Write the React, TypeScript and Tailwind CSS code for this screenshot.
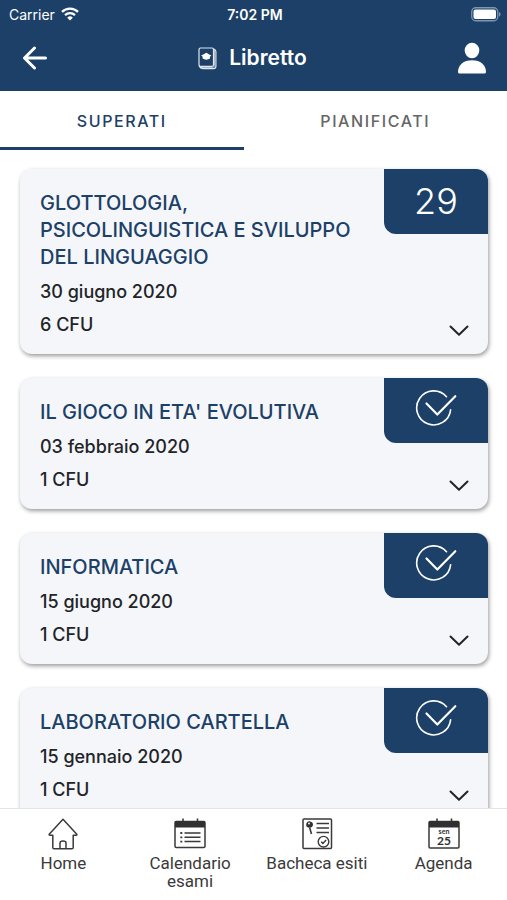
import React, { useState } from "react";

interface Exam {
  id: string;
  title: string;
  date: string;
  cfu: number;
  grade?: number;
}

const exams: Exam[] = [
  { id: "e1", title: "GLOTTOLOGIA, PSICOLINGUISTICA E SVILUPPO DEL LINGUAGGIO", date: "30 giugno 2020", cfu: 6, grade: 29 },
  { id: "e2", title: "IL GIOCO IN ETA' EVOLUTIVA", date: "03 febbraio 2020", cfu: 1 },
  { id: "e3", title: "INFORMATICA", date: "15 giugno 2020", cfu: 1 },
  { id: "e4", title: "LABORATORIO CARTELLA", date: "15 gennaio 2020", cfu: 1 },
];

const WifiIcon = () => (
  <svg width="18" height="14" viewBox="0 0 18 14" fill="none" stroke="white" strokeWidth="2.3">
    <path d="M1 4.9a11.6 11.6 0 0 1 16 0" />
    <path d="M4 8.1a7.2 7.2 0 0 1 10 0" />
    <path d="M9 13.6 6.2 10.7a4 4 0 0 1 5.6 0z" fill="white" stroke="none" />
  </svg>
);

const BatteryIcon = () => (
  <svg width="31" height="15" viewBox="0 0 31 15">
    <rect x="1.75" y="0.75" width="26" height="13" rx="4" fill="none" stroke="#8096ae" strokeWidth="1.3" />
    <rect x="3.5" y="2.5" width="22.5" height="9.5" rx="2" fill="white" />
    <path d="M29 5v4.600c1-.4 1.500-1.300 1.500-2.300S30 5.400 29 5z" fill="#8096ae" />
  </svg>
);

const BackIcon = () => (
  <svg width="26" height="24" viewBox="0 0 26 24" fill="none" stroke="white" strokeWidth="3" strokeLinecap="round" strokeLinejoin="round">
    <path d="M12.500 2 2.500 12l10 10M3 12h20.500" />
  </svg>
);

const BookletIcon = () => (
  <svg width="19" height="23" viewBox="0 0 19 23" fill="none" stroke="#dfe6ee" strokeWidth="1.200" strokeLinejoin="round">
    <rect x="1" y="1" width="14.500" height="18.300" rx="1.500" />
    <path d="M15.500 1.800c1.600.8 2.400 1.300 2.400 2.700v14.800c0 1.500-.8 2.400-2.300 2.400H5.200c-2.200 0-3.200-.7-4.200-3.200" />
    <path d="M16.300 3v15.500c0 1.200-.6 1.800-1.800 1.800H3" strokeWidth="0.900" />
    <path d="m8.300 5.800 5.200 2.900-1.500.9v1.900c-2 1.500-5.400 1.500-7.400 0V9.600L3 8.700z" fill="white" stroke="none" />
  </svg>
);

const UserIcon = () => (
  <svg width="30" height="32" viewBox="0 0 30 32" fill="white">
    <ellipse cx="15" cy="8.500" rx="7.300" ry="7.800" />
    <path d="M1 30C1 23 6.500 18.300 15 18.300S29 23 29 30c0 .9-.7 1.500-1.600 1.500H2.600C1.700 31.500 1 30.900 1 30z" />
  </svg>
);

const CheckIcon = () => (
  <svg width="42" height="38" viewBox="0 0 42 38" fill="none" stroke="white" strokeLinecap="round" strokeLinejoin="round">
    <path d="M31.500 7.700A17 17 0 1 0 35.600 20.800" strokeWidth="1.600" />
    <path d="M11.500 14.500 22.300 25.500 40.300 7.200" strokeWidth="2.200" />
  </svg>
);

const ChevronIcon = () => (
  <svg width="20" height="12" viewBox="0 0 20 12" fill="none" stroke="#222428" strokeWidth="2" strokeLinecap="round" strokeLinejoin="round">
    <path d="m1.500 1.500 8.500 8.300 8.500-8.300" />
  </svg>
);

const HomeIcon = () => (
  <svg width="32" height="32" viewBox="0 0 32 32" fill="none" stroke="#3a3a3a" strokeWidth="1.500" strokeLinejoin="round">
    <path d="M16 1.200 2.200 16.300c-.3.500 0 .9.600.9h3v12.300c0 .8.400 1.300 1.300 1.300h17.800c.9 0 1.300-.5 1.300-1.300V17.200h3c.6 0 .9-.4.600-.9z" />
    <path d="M13 30.500v-5.700c0-1.300.9-1.900 3-1.900s3 .6 3 1.900v5.700" />
  </svg>
);

const CalendarIcon = () => (
  <svg width="32" height="32" viewBox="0 0 32 32" fill="none" stroke="#3a3a3a" strokeWidth="1.500">
    <rect x="1" y="3.500" width="30" height="26" rx="1.200" />
    <path d="M1 3h30v6.500H1z" fill="#303030" stroke="none" />
    <path d="M9 0.500v3M23.500 0.500v3" strokeWidth="1.600" />
    <path d="M10.500 15h16M10.500 19.300h16M10.500 23.600h16" />
    <path d="M6.300 15h2M6.300 19.300h2M6.300 23.600h2" strokeWidth="1.800" />
  </svg>
);

const BoardIcon = () => (
  <svg width="32" height="32" viewBox="0 0 32 32" fill="none" stroke="#3a3a3a" strokeWidth="1.500">
    <rect x="2" y="1" width="28.500" height="29.500" rx="1" />
    <path d="M15.500 5.500H28M15.500 10H28M15.500 14.500H28" strokeWidth="1.600" />
    <path d="M5.200 7.500C4.800 4.800 6.800 3 9 3.400c2.200.3 3.400 2 2.900 3.800-.4 1.500-1.400 2.300-2.900 2.400-2 .2-3.500-.5-3.800-2.100z" fill="#303030" stroke="none" />
    <path d="M8.600 9.500 10.500 16" strokeWidth="1.600" />
    <circle cx="8" cy="5.500" r="0.900" fill="white" stroke="none" />
    <circle cx="22.500" cy="23.700" r="5.300" strokeWidth="1.400" />
    <path d="m20.200 23.700 1.700 1.700 3.200-3.300" />
  </svg>
);

const AgendaIcon = () => (
  <svg width="32" height="32" viewBox="0 0 32 32" fill="none" stroke="#3a3a3a" strokeWidth="1.500">
    <rect x="1" y="3.500" width="30" height="26.500" rx="1.200" />
    <path d="M1 3h30v6.500H1z" fill="#303030" stroke="none" />
    <path d="M9 0.500v3M23.500 0.500v3" strokeWidth="1.600" />
    <g fill="#303030" stroke="none" fontFamily="Lato, sans-serif" fontWeight="700" textAnchor="middle">
      <text x="16" y="15.500" fontSize="7">sen</text>
      <text x="16" y="27" fontSize="12">25</text>
    </g>
  </svg>
);

const navItems = [
  { label: "Home", icon: <HomeIcon /> },
  { label: "Calendario esami", icon: <CalendarIcon /> },
  { label: "Bacheca esiti", icon: <BoardIcon /> },
  { label: "Agenda", icon: <AgendaIcon /> },
];

const ExamCard: React.FC<{ exam: Exam }> = ({ exam }) => (
  <article className="relative flex flex-col gap-[9px] pt-[21px] pb-[17px] pl-5 rounded-xl bg-[#f4f6fa] overflow-hidden shadow-[1px_2px_4px_rgba(0,0,0,0.4)]">
    <h2 className="pr-[130px] text-[20px] leading-[27px] font-[450] text-[#1c4067]">{exam.title}</h2>
    <p className="text-[18px] leading-6 font-[450] text-[#222428]">{exam.date}</p>
    <p className="text-[18px] leading-6 font-[450] text-[#222428]">{exam.cfu} CFU</p>

    {/* Grade, or a tick for a pass without grade */}
    <div className="absolute top-0 right-0 w-[104px] h-[65px] flex justify-center rounded-bl-xl bg-[#1c4067] text-white">
      {exam.grade ? (
        <span className="text-[36px] leading-[65px] font-[350]">{exam.grade}</span>
      ) : (
        <span className="pt-[11px]"><CheckIcon /></span>
      )}
    </div>

    <button type="button" aria-label="Mostra dettagli" className="absolute bottom-0 right-0 pr-[19px] pb-[17px]">
      <ChevronIcon />
    </button>
  </article>
);

export default function App() {
  const [tab, setTab] = useState("superati");

  return (
    <div className="h-screen flex flex-col bg-white font-['Inter',sans-serif]">
      {/* Status bar and title */}
      <header className="bg-[#1c4067] text-white">
        <div className="grid grid-cols-3 items-center h-7 pl-[9px] pr-[6px] text-[14px]">
          <div className="flex items-center gap-[6px]">
            <span>Carrier</span>
            <WifiIcon />
          </div>
          <span className="text-center font-semibold">7:02 PM</span>
          <div className="flex justify-end"><BatteryIcon /></div>
        </div>
        <div className="flex items-center justify-between h-[63px] pl-[22px] pr-5 pb-[3px]">
          <button type="button" aria-label="Indietro"><BackIcon /></button>
          <h1 className="flex items-center gap-3 text-[21px] font-semibold">
            <BookletIcon />
            Libretto
          </h1>
          <button type="button" aria-label="Profilo"><UserIcon /></button>
        </div>
      </header>

      {/* Tabs */}
      <div role="tablist" className="flex h-[59px] text-[16px] font-medium tracking-widest">
        <button
          type="button"
          role="tab"
          aria-selected={tab === "superati"}
          onClick={() => setTab("superati")}
          className={`flex-auto pt-1 border-b-3 ${tab === "superati" ? "border-[#1c4067] text-[#1c4067]" : "border-transparent text-[#666666]"}`}
        >
          SUPERATI
        </button>
        <button
          type="button"
          role="tab"
          aria-selected={tab === "pianificati"}
          onClick={() => setTab("pianificati")}
          className={`flex-auto pt-1 border-b-3 ${tab === "pianificati" ? "border-[#1c4067] text-[#1c4067]" : "border-transparent text-[#666666]"}`}
        >
          PIANIFICATI
        </button>
      </div>

      {/* Exams list */}
      <main className="flex-1 min-h-0 overflow-y-auto [scrollbar-width:none] flex flex-col gap-6 pl-5 pr-[19px] pt-[19px] pb-6 *:shrink-0">
        {tab === "superati" && exams.map((exam) => <ExamCard key={exam.id} exam={exam} />)}
      </main>

      {/* Bottom navigation */}
      <nav className="grid grid-cols-4 h-[92px] pt-[9px] border-t border-[#e4e4e4] bg-white font-['Roboto',sans-serif] text-[17px] leading-[18px] text-[#3a3a3a]">
        {navItems.map((item) => (
          <a key={item.label} href="#" className="flex flex-col items-center gap-1 text-center">
            {item.icon}
            <span>{item.label}</span>
          </a>
        ))}
      </nav>
    </div>
  );
}
